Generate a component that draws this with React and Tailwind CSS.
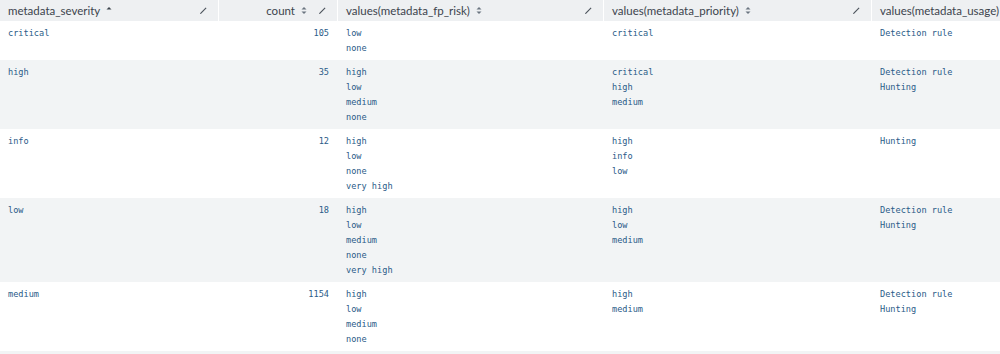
import React from "react";

const rows = [
  { sev: "critical", count: "105", fp: ["low", "none"], pri: ["critical"], usage: ["Detection rule"] },
  { sev: "high", count: "35", fp: ["high", "low", "medium", "none"], pri: ["critical", "high", "medium"], usage: ["Detection rule", "Hunting"] },
  { sev: "info", count: "12", fp: ["high", "low", "none", "very high"], pri: ["high", "info", "low"], usage: ["Hunting"] },
  { sev: "low", count: "18", fp: ["high", "low", "medium", "none", "very high"], pri: ["high", "low", "medium"], usage: ["Detection rule", "Hunting"] },
  { sev: "medium", count: "1154", fp: ["high", "low", "medium", "none"], pri: ["high", "medium"], usage: ["Detection rule", "Hunting"] },
];

const grid = "grid grid-cols-[218px_119px_266px_268px_200px] w-[1071px]";

const Pencil = () => (
  <svg width="9" height="9" viewBox="0 0 9 9" className="shrink-0">
    <path d="M1 8 L1.3 6.9 L6.7 1.5 L7.5 2.3 L2.1 7.7 Z" fill="#4a525b" />
  </svg>
);

const SortBoth = () => (
  <svg width="6" height="9" viewBox="0 0 6 9" className="shrink-0">
    <path d="M0.5 3.5 L3 1 L5.5 3.5 Z" fill="#6b7580" />
    <path d="M0.5 5.5 L3 8 L5.5 5.5 Z" fill="#6b7580" />
  </svg>
);

const SortUp = () => (
  <svg width="6" height="9" viewBox="0 0 6 9" className="shrink-0">
    <path d="M0.5 3.5 L3 1 L5.5 3.5 Z" fill="#3c444d" />
  </svg>
);

const Head = ({ label, sort, right, first, edit = true }) => (
  <div
    className={`flex items-center h-[21px] pl-2 pr-[10px] ${first ? "" : "border-l border-white"} ${
      right ? "justify-end" : ""
    }`}
  >
    <span className="whitespace-nowrap">{label}</span>
    <span className="ml-[6px] flex items-center">{sort === "up" ? <SortUp /> : <SortBoth />}</span>
    {right ? (
      <span className="ml-[11px] flex items-center">
        <Pencil />
      </span>
    ) : edit ? (
      <span className="ml-auto flex items-center">
        <Pencil />
      </span>
    ) : null}
  </div>
);

const Lines = ({ items, first }) => (
  <div className={`pl-2 pt-[5px] pb-[4px] ${first ? "" : "border-l border-transparent"}`}>
    {items.map((t) => (
      <div key={t} className="h-[15px] leading-[15px] whitespace-pre">
        {t}
      </div>
    ))}
  </div>
);

export default function App() {
  return (
    <div className="w-[1000px] h-[354px] overflow-hidden bg-white">
      <div className={`${grid} bg-[#eef0f2] text-[#3c444d] text-[11.5px] font-['Lato',sans-serif]`}>
        <Head label="metadata_severity" sort="up" first />
        <Head label="count" right />
        <Head label="values(metadata_fp_risk)" />
        <Head label="values(metadata_priority)" />
        <Head label="values(metadata_usage)" />
      </div>
      <div className="text-[#2a5b88] text-[8.6px] font-['DejaVu_Sans_Mono',monospace]">
        {rows.map((r, i) => (
          <div key={r.sev} className={`${grid} ${i % 2 ? "bg-[#f2f4f5]" : "bg-white"}`}>
            <Lines items={[r.sev]} first />
            <div className="pt-[5px] pb-[4px] pr-2 text-right border-l border-transparent">
              <div className="h-[15px] leading-[15px]">{r.count}</div>
            </div>
            <Lines items={r.fp} />
            <Lines items={r.pri} />
            <Lines items={r.usage} />
          </div>
        ))}
        <div className="h-[10px] bg-[#f2f4f5]" />
      </div>
    </div>
  );
}
